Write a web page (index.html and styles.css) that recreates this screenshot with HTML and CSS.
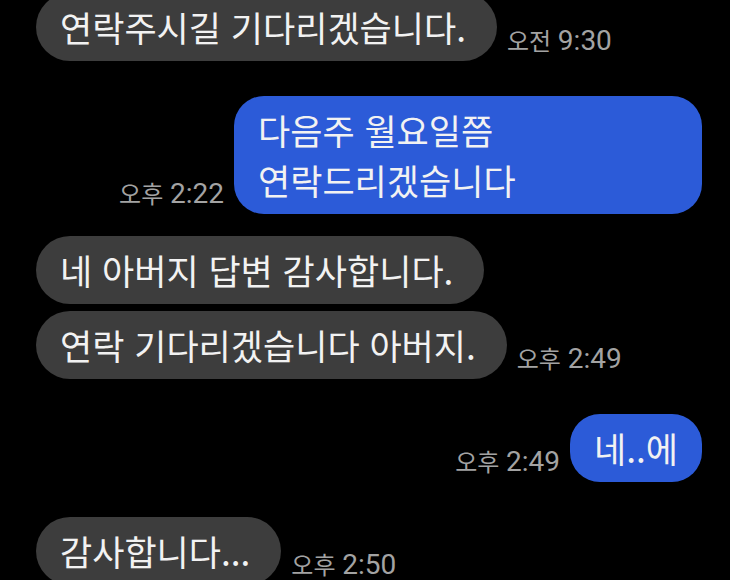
FILE: index.html
```html
<!DOCTYPE html>
<html lang="ko">
<head>
    <meta charset="UTF-8">
    <meta name="viewport" content="width=device-width, initial-scale=1.0">
    <title>메시지</title>
    <link rel="stylesheet" href="styles.css">
</head>
<body>
    <!-- Conversation -->
    <div class="chat">
        <div class="row in">
            <div class="bubble gray">연락주시길 기다리겠습니다.</div>
            <span class="time">오전 <span class="clock">9:30</span></span>
        </div>

        <div class="row out gap-lg">
            <span class="time">오후 <span class="clock">2:22</span></span>
            <div class="bubble blue">다음주 월요일쯤 연락드리겠습니다</div>
        </div>

        <div class="row in gap-md">
            <div class="bubble gray">네 아버지 답변 감사합니다.</div>
        </div>

        <div class="row in gap-sm">
            <div class="bubble gray">연락 기다리겠습니다 아버지.</div>
            <span class="time">오후 <span class="clock">2:49</span></span>
        </div>

        <div class="row out gap-lg">
            <span class="time">오후 <span class="clock">2:49</span></span>
            <div class="bubble blue">네..에</div>
        </div>

        <div class="row in gap-lg">
            <div class="bubble gray">감사합니다...</div>
            <span class="time">오후 <span class="clock">2:50</span></span>
        </div>
    </div>
</body>
</html>
```

FILE: styles.css
```css
* {
    box-sizing: border-box;
}

body {
    margin: 0;
    background-color: #000;
    font-family: 'Noto Sans CJK KR', 'Noto Sans', sans-serif;
    height: 100vh;
    overflow: hidden; /* screenshot crop */
}

.chat {
    display: flex;
    flex-direction: column;
    padding: 0 28px 0 36px;
    margin-top: -7px; /* first bubble is cut off at the top */
}

.row {
    display: flex;
    align-items: flex-end;
    gap: 10px;
}

.row.in {
    justify-content: flex-start;
}

.row.out {
    justify-content: flex-end;
}

.gap-lg { margin-top: 35px; }
.gap-md { margin-top: 22px; }
.gap-sm { margin-top: 7px; }

.bubble {
    padding: 9px 31px 9px 24px;
    font-size: 35px;
    line-height: 50px;
    color: #f2f2f2;
    border-radius: 34px;
    word-break: keep-all;
}

.bubble.gray {
    max-width: 540px;
    background-color: #3d3d3d;
}

.bubble.blue {
    max-width: 468px;
    background-color: #2c5bd8;
    padding-right: 24px;
    border-radius: 30px;
}

.time {
    white-space: nowrap;
    font-size: 24px;
    line-height: 1;
    color: #a3a3a3;
    margin-bottom: 6px;
}

.time .clock {
    font-family: Roboto, 'Noto Sans', sans-serif;
    font-size: 28px;
}
```
